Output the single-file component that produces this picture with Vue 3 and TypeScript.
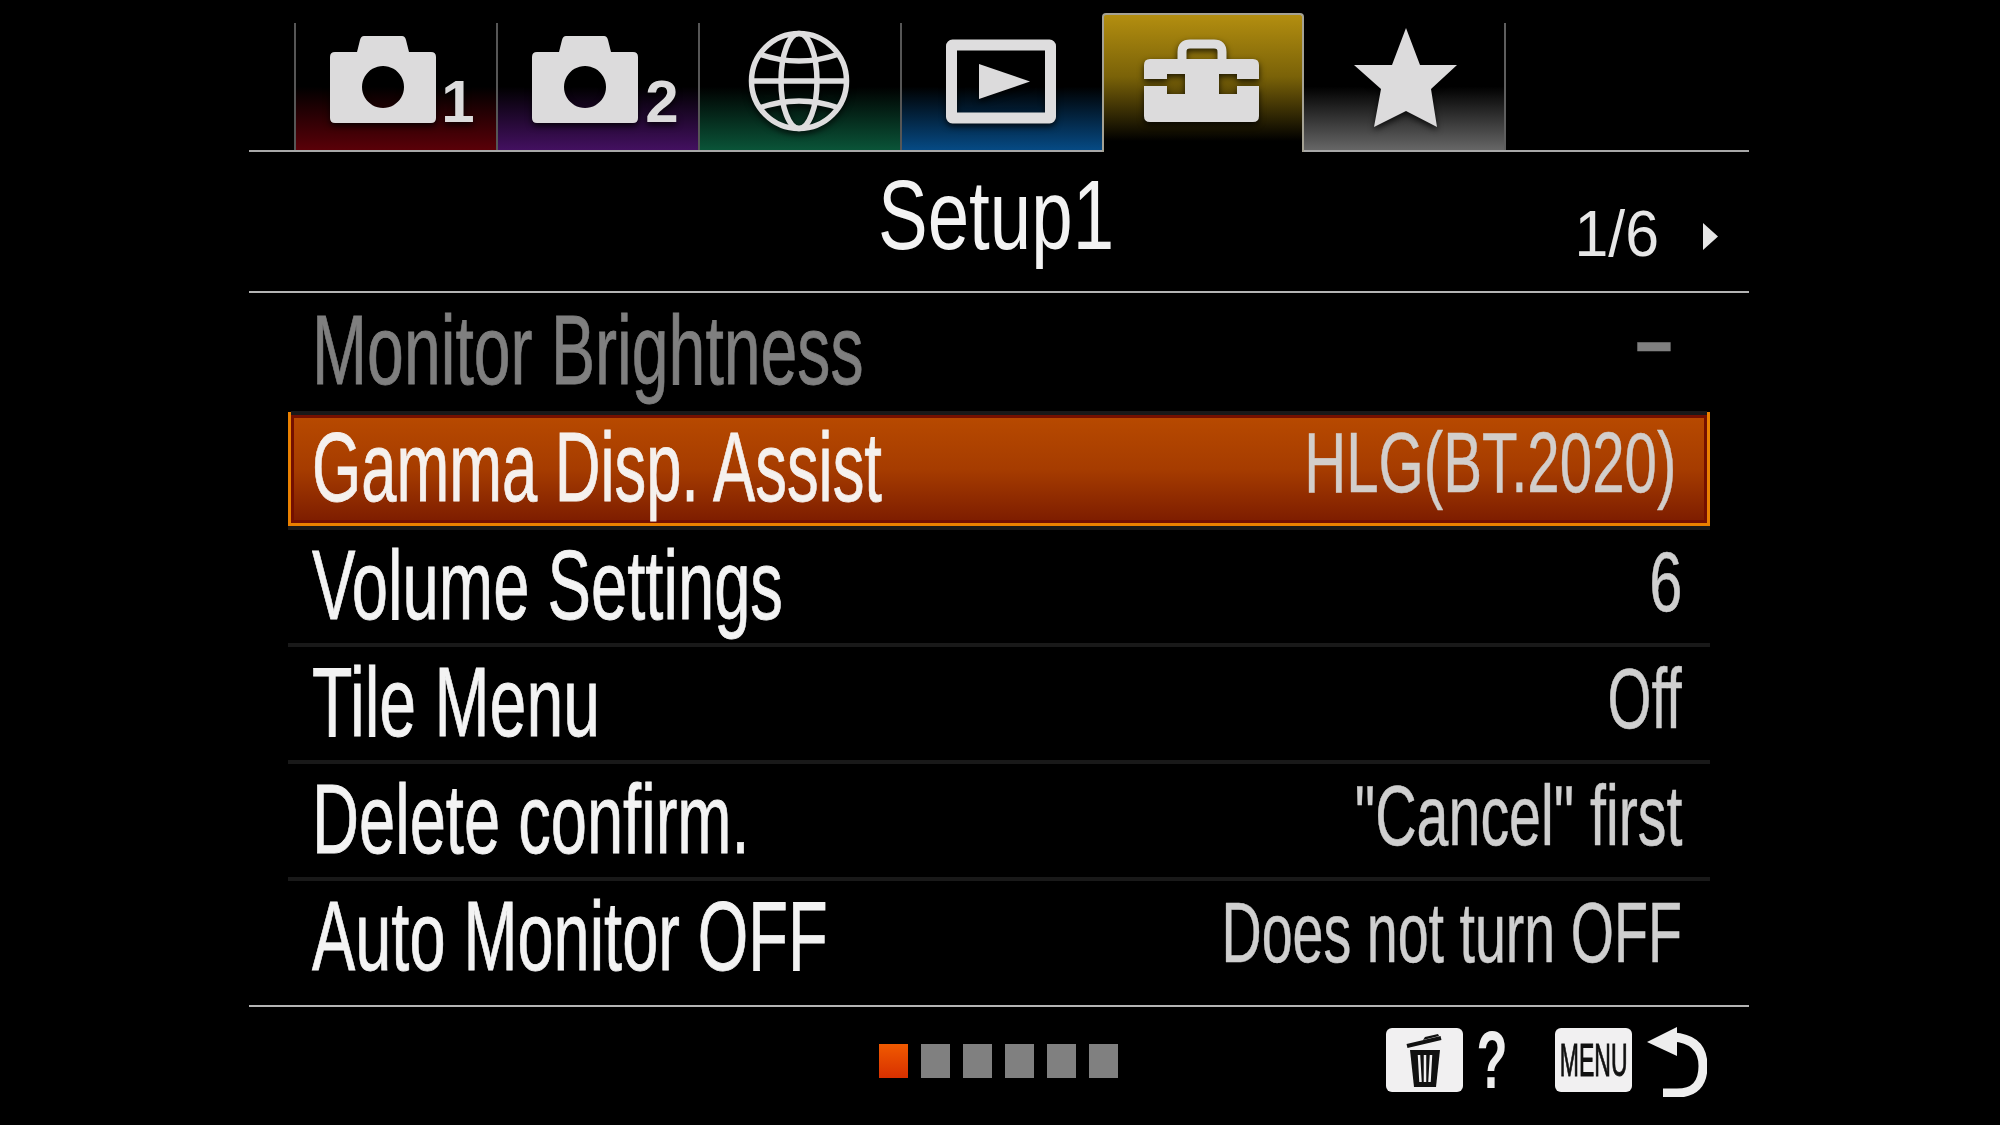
<script setup lang="ts">
interface Row { label: string; value: string; sl: number; sv: number; state?: 'dim' | 'active' }
const rows: Row[] = [
  { label: 'Monitor Brightness', value: '–', sl: 0.675, sv: 0.78, state: 'dim' },
  { label: 'Gamma Disp. Assist', value: 'HLG(BT.2020)', sl: 0.646, sv: 0.685, state: 'active' },
  { label: 'Volume Settings', value: '6', sl: 0.665, sv: 0.7 },
  { label: 'Tile Menu', value: 'Off', sl: 0.675, sv: 0.665 },
  { label: 'Delete confirm.', value: '"Cancel" first', sl: 0.664, sv: 0.675 },
  { label: 'Auto Monitor OFF', value: 'Does not turn OFF', sl: 0.662, sv: 0.654 },
]
const dots = [0, 1, 2, 3, 4, 5]
</script>

<template>
  <div class="screen">
    <div class="tabs">
      <div class="tab red">
        <svg class="ic" viewBox="0 0 202 128">
          <path class="g" fill-rule="evenodd" d="M70 14h38q3 0 4 4l3 12h22q5 0 5 5v61q0 5-5 5H41q-5 0-5-5V35q0-5 5-5h22l3-12q1-4 4-4zM89 44a21 21 0 1 0 .01 0z" />
          <text class="dig" x="164" y="100">1</text>
        </svg>
      </div>
      <div class="tab purple">
        <svg class="ic" viewBox="0 0 202 128">
          <path class="g" fill-rule="evenodd" d="M70 14h38q3 0 4 4l3 12h22q5 0 5 5v61q0 5-5 5H41q-5 0-5-5V35q0-5 5-5h22l3-12q1-4 4-4zM89 44a21 21 0 1 0 .01 0z" />
          <text class="dig" x="166" y="100">2</text>
        </svg>
      </div>
      <div class="tab green">
        <svg class="ic" viewBox="0 0 202 128">
          <g class="ln" stroke-width="5.5">
            <circle cx="101" cy="59" r="47.5" />
            <ellipse cx="101" cy="59" rx="18" ry="47.5" />
            <path d="M53 59h96M61 32q40 14 80 0M61 86q40-14 80 0" />
          </g>
        </svg>
      </div>
      <div class="tab blue">
        <svg class="ic" viewBox="0 0 202 128">
          <rect class="ln" x="51.5" y="23" width="99" height="73" rx="1" stroke-width="11" />
          <path class="g" d="M79 42l51 17.500L79 77z" />
        </svg>
      </div>
      <div class="tab gold">
        <svg class="ic" viewBox="0 0 202 128">
          <path class="ln" stroke-width="9" d="M80 40V30q0-8 8-8h24q8 0 8 8v10" />
          <path class="g" d="M48 37H151q6 0 6 6V57H135V52H117V72H135V64H157V94q0 6-6 6H48q-6 0-6-6V64H65V72H83V52H65V57H42V43q0-6 6-6z" />
        </svg>
      </div>
      <div class="tab gray">
        <svg class="ic star" viewBox="0 0 202 128">
          <path class="g" d="M101 6l14 37h37l-26 24 6 38-31-16-32 16 7-38-27-24h38z" />
        </svg>
      </div>
    </div>

    <div class="head">
      <span class="title">Setup1</span>
      <span class="page"><span class="num">1/6</span></span>
      <svg class="next" viewBox="0 0 15 27"><path d="M0 0l15 13.500L0 27z" /></svg>
    </div>

    <div class="list">
      <div v-for="r in rows" :key="r.label" class="row" :class="r.state">
        <div class="cell"><span class="lab" :style="{ '--sx': r.sl }">{{ r.label }}</span></div>
        <div class="cell end"><span class="val" :style="{ '--sx': r.sv }">{{ r.value }}</span></div>
      </div>
    </div>

    <div class="foot">
      <div class="dots">
        <i v-for="d in dots" :key="d" class="dot" :class="{ on: d === 0 }"></i>
      </div>
      <div class="key trash">
        <svg viewBox="0 0 77 64" width="77" height="64">
          <path d="M21 18L55 10" stroke="#111" stroke-width="4" fill="none" />
          <path d="M37 12l2-3 13-3 1 2z" fill="#111" />
          <path d="M24 22h30l-4 37H28z" fill="#111" />
          <path d="M33 27l1.500 27M39 27v27M45 27l-1.500 27" stroke="#f1f0f1" stroke-width="2.500" fill="none" />
        </svg>
      </div>
      <span class="help"><span>?</span></span>
      <div class="key menu"><span>MENU</span></div>
      <svg class="back" viewBox="0 0 60 70" width="60" height="70">
        <path d="M0 15L30 0v29z" fill="#eee" />
        <path d="M26 10q30 2 30 29t-26 27H16" fill="none" stroke="#eee" stroke-width="9" />
      </svg>
    </div>
  </div>
</template>

<style scoped>
.screen {
  width: 1500px;
  height: 1125px;
  margin-left: 249px;
  color: #f3f3f3;
  font-family: "Liberation Sans", Arial, sans-serif;
  display: flex;
  flex-direction: column;
}
.tabs {
  height: 150px;
  padding-left: 44.500px;
  border-bottom: 2px solid #a8a8a8;
  display: flex;
  align-items: flex-end;
  flex: none;
  box-sizing: content-box;
}
.tab {
  width: 202px;
  height: 127px;
  flex: none;
  box-sizing: border-box;
  border-left: 2px solid #565656;
  display: flex;
  align-items: flex-end;
}
.ic {
  display: block;
  width: 202px;
  height: 128px;
  margin-left: -2px;
  flex: none;
  filter: drop-shadow(0 3px 3px rgba(0, 0, 0, 0.75));
}
.star { margin-left: 1px; }
.g { fill: #dcdbdc; }
.ln { fill: none; stroke: #dedddE; }
.dig {
  font-family: "Liberation Sans", sans-serif;
  font-weight: 700;
  font-size: 60px;
  fill: #dcdbdc;
  text-anchor: middle;
}
.red { background: linear-gradient(#000 50%, #5a0008 100%); }
.purple { background: linear-gradient(#000 50%, #431060 100%); }
.green { background: linear-gradient(#000 50%, #0a5438 100%); }
.blue { background: linear-gradient(#000 50%, #064a84 100%); }
.gold {
  height: 139px;
  margin-bottom: -2px;
  border: 2px solid #a5a294;
  border-bottom: 0;
  border-radius: 4px 4px 0 0;
  background: linear-gradient(#b38e10 0%, #7a6208 45%, #000 92%);
}
.gold .ic { margin-bottom: 2px; }
.gray {
  border-left: 0;
  border-right: 2px solid #5e5e5e;
  background: linear-gradient(#000 50%, #666 100%);
}
.head {
  height: 139px;
  flex: none;
  border-bottom: 2px solid #b4b4b4;
  display: flex;
  align-items: flex-start;
}
.title {
  margin-left: 629px;
  font-size: 98px;
  line-height: 126px;
  white-space: nowrap;
  transform: scaleX(0.76);
  transform-origin: left center;
}
.page {
  margin-left: auto;
  display: flex;
  justify-content: flex-end;
  width: 0;
}
.num {
  font-size: 64px;
  line-height: 164px;
  white-space: nowrap;
  flex: none;
  margin-right: 44px;
  color: #e6e6e6;
  transform: scaleX(0.95);
  transform-origin: right center;
}
.next {
  width: 15px;
  height: 27px;
  margin: 71px 31px 0 0;
  flex: none;
  fill: #e6e6e6;
}
.list {
  margin: 2px 39px 0;
  display: flex;
  flex-direction: column;
  gap: 4px;
  flex: none;
}
.row {
  height: 113.300px;
  padding: 0 28px 0 24px;
  box-sizing: border-box;
  display: grid;
  grid-template-columns: 1fr 1fr;
  position: relative;
}
.row + .row::before {
  content: "";
  position: absolute;
  left: 0;
  right: 0;
  top: -4px;
  height: 4px;
  background: #191919;
}
.cell {
  min-width: 0;
  display: flex;
}
.end { justify-content: flex-end; }
.lab {
  font-size: 98px;
  line-height: 110px;
  white-space: nowrap;
  flex: none;
  -webkit-text-stroke: 0.8px currentColor;
  transform: scaleX(var(--sx));
  transform-origin: left center;
}
.val {
  font-size: 85px;
  line-height: 103px;
  white-space: nowrap;
  flex: none;
  color: #cfcfcf;
  -webkit-text-stroke: 0.5px currentColor;
  transform: scaleX(var(--sx));
  transform-origin: right center;
}
.dim .lab, .dim .val { color: #7f7f7f; }
.dim .val {
  font-weight: 700;
  line-height: 92px;
  margin-right: 10px;
}
.active {
  border: 3px solid #ea8000;
  padding: 0 31px 0 21px;
  background: linear-gradient(#b84a00 0%, #a63c00 50%, #7c1c00 100%);
  box-shadow: inset 0 0 0 3px #741000;
}
.active .lab { line-height: 104px; color: #f5f1ee; }
.active .val { line-height: 96px; color: #d2cecb; }
.foot {
  margin-top: 10px;
  padding-top: 21px;
  border-top: 2px solid #b4b4b4;
  display: flex;
  align-items: flex-start;
}
.dots {
  margin: 16px 0 0 630px;
  display: flex;
  gap: 13px;
}
.dot {
  display: block;
  width: 29px;
  height: 34px;
  background: #808080;
}
.dot.on { background: linear-gradient(#f05a00, #d83000); }
.key {
  width: 77px;
  height: 64px;
  background: #f1f0f1;
  border-radius: 6px;
  color: #111;
  display: flex;
  align-items: center;
  justify-content: center;
  flex: none;
  overflow: hidden;
}
.trash { margin-left: 268px; }
.help {
  width: 28px;
  margin-left: 15px;
  display: flex;
  justify-content: center;
  font-size: 82px;
  line-height: 64px;
  font-weight: 700;
  color: #eeeeee;
}
.help span {
  flex: none;
  transform: scaleX(0.62);
}
.menu { margin-left: 49px; }
.menu span {
  flex: none;
  font-size: 46px;
  -webkit-text-stroke: 1px currentColor;
  transform: scaleX(0.5);
}
.back {
  margin: -1px 0 0 15px;
  flex: none;
}
</style>

<style>
html, body { background: #000; margin: 0; overflow: hidden; }
</style>
